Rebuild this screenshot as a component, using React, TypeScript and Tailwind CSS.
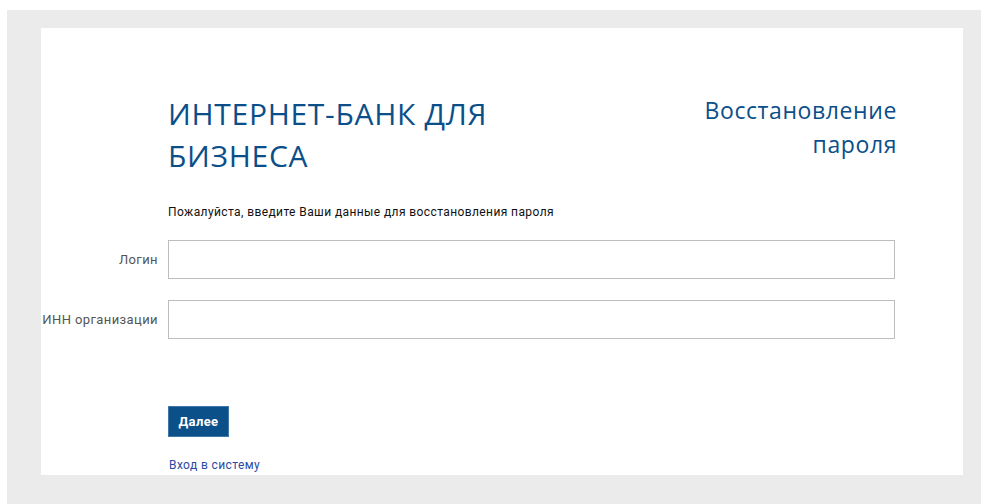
import { useState } from 'react'

const TITLE_FONT = { fontFamily: '"Open Sans", "Noto Sans", sans-serif' }
const BODY_FONT = { fontFamily: 'Roboto, "Liberation Sans", Arial, sans-serif' }

interface FieldProps {
    label: string
    value: string
    onChange: (v: string) => void
}

function Field({ label, value, onChange }: FieldProps) {
    return (
        <>
            <label className="self-center text-right text-[13px] leading-[16px] tracking-[0.4px] text-[#555]">
                {label}
            </label>
            <input
                value={value}
                onChange={e => onChange(e.target.value)}
                className="h-[39px] w-[727px] border border-[#bdbdbd] bg-white px-2 text-[13px] outline-none focus:border-[#0b5089]"
            />
        </>
    )
}

export default function App() {
    const [login, setLogin] = useState('')
    const [inn, setInn] = useState('')

    return (
        <div className="min-h-screen bg-white" style={BODY_FONT}>
            <div className="ml-[7px] mt-[10px] bg-[#ebebeb] pl-[34px] pt-[18px] pr-[18px] pb-[29px]">
                <div className="h-[447px] bg-white pt-[65px]">
                    {/* header */}
                    <div className="ml-[127px] flex w-[729px] items-start justify-between" style={TITLE_FONT}>
                        <h1 className="text-[30px] leading-[42px] tracking-[0.7px] text-[#0b4f8a]">
                            ИНТЕРНЕТ-БАНК ДЛЯ
                            <br />
                            БИЗНЕСА
                        </h1>
                        <h2 className="text-right text-[23px] leading-[34px] tracking-[0.6px] text-[#0b4f8a]">
                            Восстановление
                            <br />
                            пароля
                        </h2>
                    </div>

                    <p className="ml-[127px] mt-[27px] text-[12px] leading-[16px] tracking-[0.4px] text-[#111]">
                        Пожалуйста, введите Ваши данные для восстановления пароля
                    </p>

                    {/* form fields */}
                    <div className="mt-[20px] grid grid-cols-[117px_727px] gap-x-[10px] gap-y-[21px]">
                        <Field label="Логин" value={login} onChange={setLogin} />
                        <Field label="ИНН организации" value={inn} onChange={setInn} />
                    </div>

                    <div className="ml-[127px] mt-[67px]">
                        <button className="h-[31px] w-[61px] border border-[#3f77a8] bg-[#0b5089] text-[13px] font-bold tracking-[0.4px] text-white">
                            Далее
                        </button>
                    </div>

                    <a href="#" className="ml-[128px] mt-[20px] block text-[12px] leading-[16px] tracking-[0.4px] text-[#2b4aa6]">
                        Вход в систему
                    </a>
                </div>
            </div>
        </div>
    )
}
